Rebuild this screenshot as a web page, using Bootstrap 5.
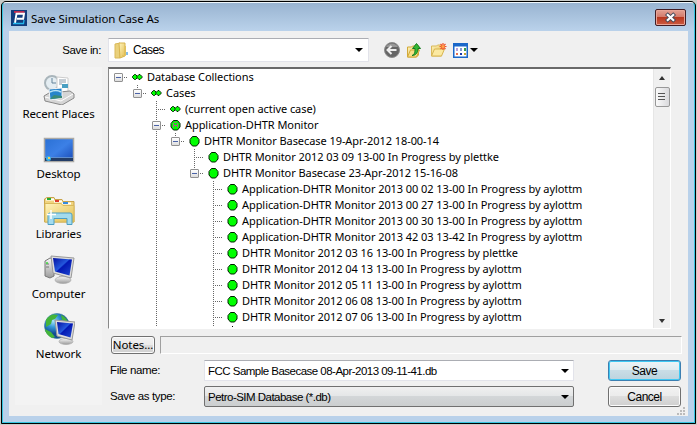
<!DOCTYPE html>
<html lang="en">
<head>
<meta charset="utf-8">
<title>Save Simulation Case As</title>
<link href="https://cdn.jsdelivr.net/npm/bootstrap@5.3.0/dist/css/bootstrap.min.css" rel="stylesheet">
<style>
html,body{width:697px;height:425px;overflow:hidden;margin:0}
body{background:#c9ccc9;font-family:"Liberation Sans",Arial,sans-serif;font-size:11.5px;line-height:16px;color:#000;padding:1px 0 1px 1px}
.win{width:695px;height:423px;border:1px solid #000;border-radius:5px 5px 0 0;background:#000}
.frame{height:421px;border:1px solid #35c5e0;border-top-color:#eef6fb;border-radius:4px 4px 0 0;background:linear-gradient(#99b4d1 0,#b9d1ea 27px,#b9d1ea 100%);padding:0 6px 5px 6px}
.titlebar{height:28px;font-family:"Noto Sans","Open Sans",sans-serif;font-size:11.5px;padding:1px 2px 0 2px}
.ttl{letter-spacing:-.1px;margin-left:4px;padding-top:2px}
.closebtn{width:31px;height:17px;border:1px solid #431d24;border-radius:2px;box-shadow:inset 0 0 0 1px #e8a497;background:linear-gradient(#e2a194 0,#d3796a 48%,#b83820 50%,#cc5b42 100%)}
.client{height:385px;background:#f0f0f0}
.toprow{height:36px;padding-top:7px}
.lb{letter-spacing:-.35px;white-space:nowrap}
.lb-in{width:92px}
.lookin{width:261px;height:24px;background:#fff;border:1px solid #e2e3ea;border-top-color:#abadb3;padding:0 5px 0 5px;border-radius:1px;margin-left:7px}
.case-n{margin-left:5px;letter-spacing:-.65px;font-size:12px}
.arr{width:0;height:0;border:4px solid transparent;border-top-color:#000;border-bottom:0}
.tools{height:24px;margin-left:14px}
.tools svg:nth-child(2){margin-left:5px}
.tools svg:nth-child(3){margin-left:8px}
.tools svg:nth-child(4){margin-left:6px}
.tools .arr{margin-left:2px}
.places{width:87px;height:338px;background:#f3f3f3;margin-left:6px;font-family:"Noto Sans","Open Sans",sans-serif;font-size:11.5px}
.place{height:60px;padding-top:4px}
.place svg{display:block}
.place span{margin-top:1px;letter-spacing:-.12px;white-space:nowrap}
.treebox{width:563px;height:262px;background:#fff;border:1px solid #888;border-top:2px solid #696969;border-right-color:#fff;border-bottom-color:#fff;overflow:hidden;margin-left:6px}
.tree{font-family:"Noto Sans","Open Sans",sans-serif;font-size:11px;letter-spacing:-.065px;white-space:nowrap;overflow:hidden;height:258px}
.tr{display:flex;height:16px;align-items:center}
.tr i{display:block;flex:none;width:19px;height:16px;background-repeat:no-repeat}
.v{background-image:repeating-linear-gradient(#666 0 1px,#fff 1px 2px);background-size:1px 16px;background-position:9px 0}
.t{background-image:repeating-linear-gradient(#666 0 1px,#fff 1px 2px),repeating-linear-gradient(90deg,#666 0 1px,#fff 1px 2px);background-size:1px 16px,10px 1px;background-position:9px 0,9px 8px}
.l{background-image:repeating-linear-gradient(#666 0 1px,#fff 1px 2px),repeating-linear-gradient(90deg,#666 0 1px,#fff 1px 2px);background-size:1px 8px,10px 1px;background-position:9px 0,9px 8px}
.f{background-image:repeating-linear-gradient(90deg,#666 0 1px,#fff 1px 2px);background-size:10px 1px;background-position:9px 8px}
.x::before{content:"";display:block;width:9px;height:9px;margin:4px 0 0 5px;border:1px solid #919191;border-radius:1px;background:linear-gradient(#4b63a7,#4b63a7) 1px 3px/5px 1px no-repeat,linear-gradient(#fff,#ddd)}
.tr svg{flex:none;width:19px;height:16px;display:block}
.sbar{width:17px;flex:none;background:#f0f0f0;border-left:1px solid #e6e6e6;padding:7px 0 5px}
.thumb{width:15px;height:20px;margin-top:7px;border:1px solid #989898;border-radius:2px;background:linear-gradient(90deg,#fafafa,#d9d9dc)}
.upa{width:0;height:0;border:3.5px solid transparent;border-bottom:4px solid #333;border-top:0}
.dna{width:0;height:0;border:3.5px solid transparent;border-top:4px solid #333;border-bottom:0}
.wbtn{border:1px solid #707070;border-radius:3px;box-shadow:inset 0 0 0 1px #fbfbfb;background:linear-gradient(#f2f2f2 0,#ebebeb 49%,#ddd 50%,#cfcfcf 100%);padding:0;color:#000;font-size:12px;line-height:14px;letter-spacing:-.5px;font-family:inherit}
.notes{width:44px;height:18px;font-family:"Noto Sans",sans-serif;font-size:11.5px;letter-spacing:-.1px}
.okb{width:73px;height:21px;border-color:#3c7fb1;box-shadow:inset 0 0 0 1px #3fc8f3;background:linear-gradient(#eef4f7 0,#dfebf0 49%,#c9dde6 50%,#bcd3de 100%)}
.cnb{width:73px;height:21px}
.status{width:522px;height:18px;border:1px solid #fff;border-top-color:#a0a0a0;border-left-color:#a0a0a0}
.field{width:370px;height:21px;padding:0 4px 0 3px}
.fname{background:#fff;border:1px solid #e2e3ea;border-top-color:#abadb3}
.ftype{border:1px solid #707070;border-radius:2px;background:linear-gradient(#f0f0f0 0,#e4e6e7 49%,#d3d6d8 50%,#cbcecf 100%)}
.flabel{width:94px}
.txtf{letter-spacing:-.52px;white-space:nowrap}
.grip{height:9px;padding-right:2px}
.grip svg{display:block}
.rightcol{width:586px}
.noterow{margin:7px 0 0 9px;gap:5px}
.rowa{margin:6px 0 0 8px}
.rowb{margin:5px 0 0 8px}
.rowa .lb,.rowb .lb{padding-top:2px}
.rowa .wbtn,.rowb .wbtn{margin-left:34px}
</style>
<script src="https://cdn.jsdelivr.net/npm/bootstrap@5.3.0/dist/js/bootstrap.bundle.min.js"></script>
</head>
<body>
<svg width="0" height="0" class="position-absolute"><defs>
<g id="dot"><path d="M7.500 3.500h4l2.500 3v3.500l-2.500 3h-4L5 10V6.500z" fill="#0f0" stroke="#002000" stroke-linejoin="round"/></g>
<g id="pair"><path d="M6.500 5.500h1l2 2v1l-2 2h-1l-2-2v-1z" fill="#0f0" stroke="#002000"/><path d="M11.500 5.500h1l2 2v1l-2 2h-1l-2-2v-1z" transform="translate(-.5 0)" fill="#0f0" stroke="#002000"/></g>
<linearGradient id="fold" x2="1" y2="1"><stop stop-color="#fff4bd"/><stop offset="1" stop-color="#e2bd4f"/></linearGradient>
<linearGradient id="scr" x2="1" y2="1"><stop stop-color="#0410a0"/><stop offset=".45" stop-color="#2458dd"/><stop offset=".5" stop-color="#0318b4"/><stop offset="1" stop-color="#1e48d0"/></linearGradient>
<linearGradient id="desk" x2="1" y2="1"><stop stop-color="#2a70d4"/><stop offset=".5" stop-color="#3c80e6"/><stop offset="1" stop-color="#1747b4"/></linearGradient>
<linearGradient id="metal" x2="0" y2="1"><stop stop-color="#f7f7f7"/><stop offset="1" stop-color="#9b9b9b"/></linearGradient>
<radialGradient id="globe" cx=".35" cy=".3"><stop stop-color="#a8e4fa"/><stop offset=".5" stop-color="#3297d8"/><stop offset="1" stop-color="#124c94"/></radialGradient>
</defs></svg>
<div class="win"><div class="frame">
<header class="titlebar d-flex align-items-center">
<svg width="16" height="16" viewBox="0 0 16 16"><path fill="#123c7c" d="M0 0h16v16H0z"/><path d="M3 2h10.500" stroke="#e02848" stroke-width="1.600"/><path d="M4 13L5.500 3.700H13L12.200 8.700H6" fill="none" stroke="#fff" stroke-width="1.900"/><path d="M2 13.500h10.500L13 10" fill="none" stroke="#24b7ed" stroke-width="1.300"/></svg>
<span class="ttl">Save Simulation Case As</span>
<div class="closebtn ms-auto d-flex align-items-center justify-content-center"><svg width="13" height="11" viewBox="0 0 13 11"><path d="M3.800 3l5.400 5M9.200 3l-5.400 5" stroke="#464b5b" stroke-width="4" stroke-linecap="square"/><path d="M3.800 3l5.400 5M9.200 3l-5.400 5" stroke="#fff" stroke-width="2.200" stroke-linecap="square"/></svg></div>
</header>
<main class="client">
<div class="toprow d-flex align-items-start">
<span class="lb lb-in text-end pt-1">Save in:</span>
<div class="lookin d-flex align-items-center">
<svg width="14" height="17" viewBox="0 0 14 17"><path d="M1 2l5-1v15H1z" fill="#ead17c" stroke="#d9b95b"/><path d="M5 1h6v13l-5 2z" fill="url(#fold)" stroke="#d8b54f"/><path d="M11.500 4v9.500H8" fill="none" stroke="#e2c25e"/><path d="M13 10v3" stroke="#5aa6e0" stroke-width="1.500"/></svg>
<span class="case-n">Cases</span><span class="arr ms-auto"></span></div>
<div class="tools d-flex align-items-center">
<svg width="18" height="18" viewBox="0 0 18 18"><circle cx="9" cy="9" r="7.500" fill="#666" stroke="#8e8e8e"/><path d="M3 6a7 7 0 0112 0z" fill="#999"/><path d="M13.500 9H5M8.500 5L4.500 9l4 4" fill="none" stroke="#eee" stroke-width="2"/></svg>
<svg width="16" height="17" viewBox="0 0 16 17"><path d="M1.500 5h4l1-1h6v9l-2 2h-9z" fill="url(#fold)" stroke="#d2a939"/><path d="M1.500 15l3-7h9l-3 7z" fill="#f8df85" stroke="#d2a939"/><path d="M6 13.500c3-1 3-4 3-7H6.500L10.500 1.500 14.500 6.500H12c0 4-2 7-6 7z" fill="#34b834" stroke="#167c20"/></svg>
<svg width="17" height="16" viewBox="0 0 17 16"><path d="M1.500 14V4h5l1-1h4v11z" fill="url(#fold)" stroke="#d9b95b"/><path d="M1.500 14l3-7h10l-3 7z" fill="#fbe9a1" stroke="#d8b54f"/><path d="M13 1v7M9.500 4.500h7M10.500 2l5 5M15.500 2l-5 5" stroke="#f0542a" stroke-width="1.200"/><circle cx="13" cy="4.500" r="1.500" fill="#ffa44a"/></svg>
<svg width="15" height="15" viewBox="0 0 15 15"><path fill="#1a67c9" d="M0 0h15v15H0z"/><path fill="#fff" d="M1.500 3.500h12v10h-12z"/><path fill="#b3a0dc" d="M3 5h2v3H3z"/><path fill="#8599d0" d="M7 5h2v3H7z"/><path fill="#339b4d" d="M11 5h2v3h-2z"/><path fill="#e8704d" d="M3 10h2v2H3z"/><path fill="#1838aa" d="M7 10h2v2H7z"/><path fill="#caa331" d="M11 10h2v2h-2z"/></svg>
<span class="arr"></span></div>
</div>
<div class="d-flex align-items-start">
<nav class="places">
<div class="place d-flex flex-column align-items-center">
<svg width="32" height="34" viewBox="0 0 32 34"><circle cx="9" cy="12" r="7" fill="#e4edf2" stroke="#a9b5bb" stroke-width="2"/><path d="M9 7v5h4" fill="none" stroke="#62839a"/><path d="M14 6l11 1v15H14z" fill="#fff" stroke="#ccc"/><path d="M16 9h7M16 11h7M16 13h3" stroke="#8b9aa8"/><path d="M19 13h6v4h-6z" fill="#4a9fc2"/><path d="M1 25l5-3 21-2 4 3v4L19 34 2 30z" fill="#d5d5d5" stroke="#888"/><path d="M2 26l16 4 12-7" fill="none" stroke="#fff"/><path d="M6 18l13-1v10L7 29z" fill="#2785cb" stroke="#f4f4f4"/><path d="M7 28l4-4 8 1v2z" fill="#3a8a77"/><path d="M7 21q6-3 11 0" stroke="#b9e3f8" fill="none" stroke-width="1.500"/></svg><span>Recent Places</span></div>
<div class="place d-flex flex-column align-items-center">
<svg width="32" height="34" viewBox="0 0 32 34"><path d="M1.500 7.500h29v23h-29z" fill="url(#desk)" stroke="#aaa9a5" stroke-width="1.500"/><path d="M2 26.500h28V30H2z" fill="#233d67"/><path d="M2 26.500h28" stroke="#6d9ddb" stroke-width=".8"/><circle cx="5.500" cy="27.500" r="2.500" fill="#39afe5"/><path d="M5 26h2v2H5z" fill="#e6d164"/></svg><span>Desktop</span></div>
<div class="place d-flex flex-column align-items-center">
<svg width="32" height="34" viewBox="0 0 32 34"><path d="M1.500 31V8L4 6.500h7l1 2h7l1 2h11V31z" fill="#f0d47e" stroke="#c8a34a"/><path d="M3 8.500h8M11 10.500h8M19 12.500h9" stroke="#fff" stroke-width="2"/><path d="M4 8h4" stroke="#27ad35" stroke-width="2"/><path d="M12 10h4" stroke="#db3c2b" stroke-width="2"/><path d="M20 12h5" stroke="#358be0" stroke-width="2"/><path d="M2 12.500h16l2 2h11V31H2z" fill="url(#fold)" stroke="#d9b95b"/><path d="M5 33.500V24q0-2 2-2h20q2 0 2 2v9.500h-5v-6H11v6z" fill="#a4dbed" stroke="#4c9fc5"/><path d="M8 19v9M4 23.500h9" stroke="#fff" stroke-width="1.500"/></svg><span>Libraries</span></div>
<div class="place d-flex flex-column align-items-center">
<svg width="32" height="34" viewBox="0 0 32 34"><path d="M2 10l5-3 4 1v17l-4 2-5-2z" fill="url(#metal)" stroke="#777"/><path d="M3 13h3M3 16h3" stroke="#777"/><circle cx="4" cy="12" r="1" fill="#3bdc3b"/><path d="M16 25l7 1 1 3-8-1z" fill="#aaa"/><ellipse cx="20" cy="29" rx="8" ry="3.500" fill="url(#metal)" stroke="#aaa" stroke-width=".7"/><path d="M8 5l23 2-3 20L10 22z" fill="#ddd" stroke="#999"/><path d="M10 7l19 1.500-2.500 16L12 20.500z" fill="url(#scr)"/></svg><span>Computer</span></div>
<div class="place d-flex flex-column align-items-center">
<svg width="32" height="34" viewBox="0 0 32 34"><circle cx="14" cy="15" r="12.500" fill="url(#globe)" stroke="#357b9a" stroke-width=".6"/><path d="M3 9c4-6 8-6 12-5l-3 4-3 1-1 4-5 3zM2 18l6 3 4 5-3 1c-4-2-7-6-7-9zM18 4c3 1 6 4 7 7l-6-2z" fill="#44b43a"/><ellipse cx="23" cy="30.500" rx="7" ry="3" fill="url(#metal)" stroke="#aaa" stroke-width=".7"/><path d="M12 9l20 2-3 18-15-4z" fill="#ddd" stroke="#999"/><path d="M14 11l16 1.500-2.500 14L15.500 23z" fill="url(#scr)"/></svg><span>Network</span></div>
</nav>
<div class="rightcol">
<div class="treebox d-flex">
<div class="tree flex-grow-1">
<div class="tr"><i class="x f"></i><svg><use href="#pair"/></svg><span>Database Collections</span></div>
<div class="tr"><i></i><i class="x l"></i><svg><use href="#pair"/></svg><span>Cases</span></div>
<div class="tr"><i></i><i></i><i class="t"></i><svg><use href="#pair"/></svg><span>(current open active case)</span></div>
<div class="tr"><i></i><i></i><i class="x t"></i><svg><use href="#dot"/><path d="M7.500 10.500v-4l1-1h2l1 1v4M7.500 8.500h4" fill="none" stroke="#a85a8c"/></svg><span>Application-DHTR Monitor</span></div>
<div class="tr"><i></i><i></i><i class="v"></i><i class="x l"></i><svg><use href="#dot"/></svg><span>DHTR Monitor Basecase 19-Apr-2012 18-00-14</span></div>
<div class="tr"><i></i><i></i><i class="v"></i><i></i><i class="t"></i><svg><use href="#dot"/></svg><span>DHTR Monitor 2012 03 09 13-00 In Progress by plettke</span></div>
<div class="tr"><i></i><i></i><i class="v"></i><i></i><i class="x l"></i><svg><use href="#dot"/></svg><span>DHTR Monitor Basecase 23-Apr-2012 15-16-08</span></div>
<div class="tr"><i></i><i></i><i class="v"></i><i></i><i></i><i class="t"></i><svg><use href="#dot"/></svg><span>Application-DHTR Monitor 2013 00 02 13-00 In Progress by aylottm</span></div>
<div class="tr"><i></i><i></i><i class="v"></i><i></i><i></i><i class="t"></i><svg><use href="#dot"/></svg><span>Application-DHTR Monitor 2013 00 27 13-00 In Progress by aylottm</span></div>
<div class="tr"><i></i><i></i><i class="v"></i><i></i><i></i><i class="t"></i><svg><use href="#dot"/></svg><span>Application-DHTR Monitor 2013 00 30 13-00 In Progress by aylottm</span></div>
<div class="tr"><i></i><i></i><i class="v"></i><i></i><i></i><i class="t"></i><svg><use href="#dot"/></svg><span>Application-DHTR Monitor 2013 42 03 13-42 In Progress by aylottm</span></div>
<div class="tr"><i></i><i></i><i class="v"></i><i></i><i></i><i class="t"></i><svg><use href="#dot"/></svg><span>DHTR Monitor 2012 03 16 13-00 In Progress by plettke</span></div>
<div class="tr"><i></i><i></i><i class="v"></i><i></i><i></i><i class="t"></i><svg><use href="#dot"/></svg><span>DHTR Monitor 2012 04 13 13-00 In Progress by aylottm</span></div>
<div class="tr"><i></i><i></i><i class="v"></i><i></i><i></i><i class="t"></i><svg><use href="#dot"/></svg><span>DHTR Monitor 2012 05 11 13-00 In Progress by aylottm</span></div>
<div class="tr"><i></i><i></i><i class="v"></i><i></i><i></i><i class="t"></i><svg><use href="#dot"/></svg><span>DHTR Monitor 2012 06 08 13-00 In Progress by aylottm</span></div>
<div class="tr"><i></i><i></i><i class="v"></i><i></i><i></i><i class="t"></i><svg><use href="#dot"/></svg><span>DHTR Monitor 2012 07 06 13-00 In Progress by aylottm</span></div>
<div class="tr"><i></i><i></i><i class="v"></i><i></i><i></i><i class="t"></i><svg><path d="M9 1h1v1H9z"/></svg></div>
</div>
<div class="sbar d-flex flex-column align-items-center"><span class="upa"></span>
<div class="thumb d-flex justify-content-center align-items-center"><svg width="8" height="8" viewBox="0 0 8 8"><path d="M0 .5h7M0 3.500h7M0 6.500h7" stroke="#555"/></svg></div>
<span class="dna mt-auto"></span></div>
</div>
<div class="d-flex noterow"><button class="wbtn notes">Notes...</button><div class="status"></div></div>
<div class="d-flex rowa"><span class="lb flabel">File name:</span><div class="field fname d-flex align-items-center"><span class="txtf">FCC Sample Basecase 08-Apr-2013 09-11-41.db</span><span class="arr ms-auto"></span></div><button class="wbtn okb">Save</button></div>
<div class="d-flex rowb"><span class="lb flabel">Save as type:</span><div class="field ftype d-flex align-items-center"><span class="txtf">Petro-SIM Database (*.db)</span><span class="arr ms-auto"></span></div><button class="wbtn cnb">Cancel</button></div>
<div class="grip d-flex justify-content-end"><svg width="9" height="9" viewBox="0 0 9 9"><path d="M6 0h2v2H6zM3 3h2v2H3zM6 3h2v2H6zM0 6h2v2H0zM3 6h2v2H3zM6 6h2v2H6z" fill="#bbb"/></svg></div>
</div>
</div>
</main>
</div></div>
</body>
</html>
